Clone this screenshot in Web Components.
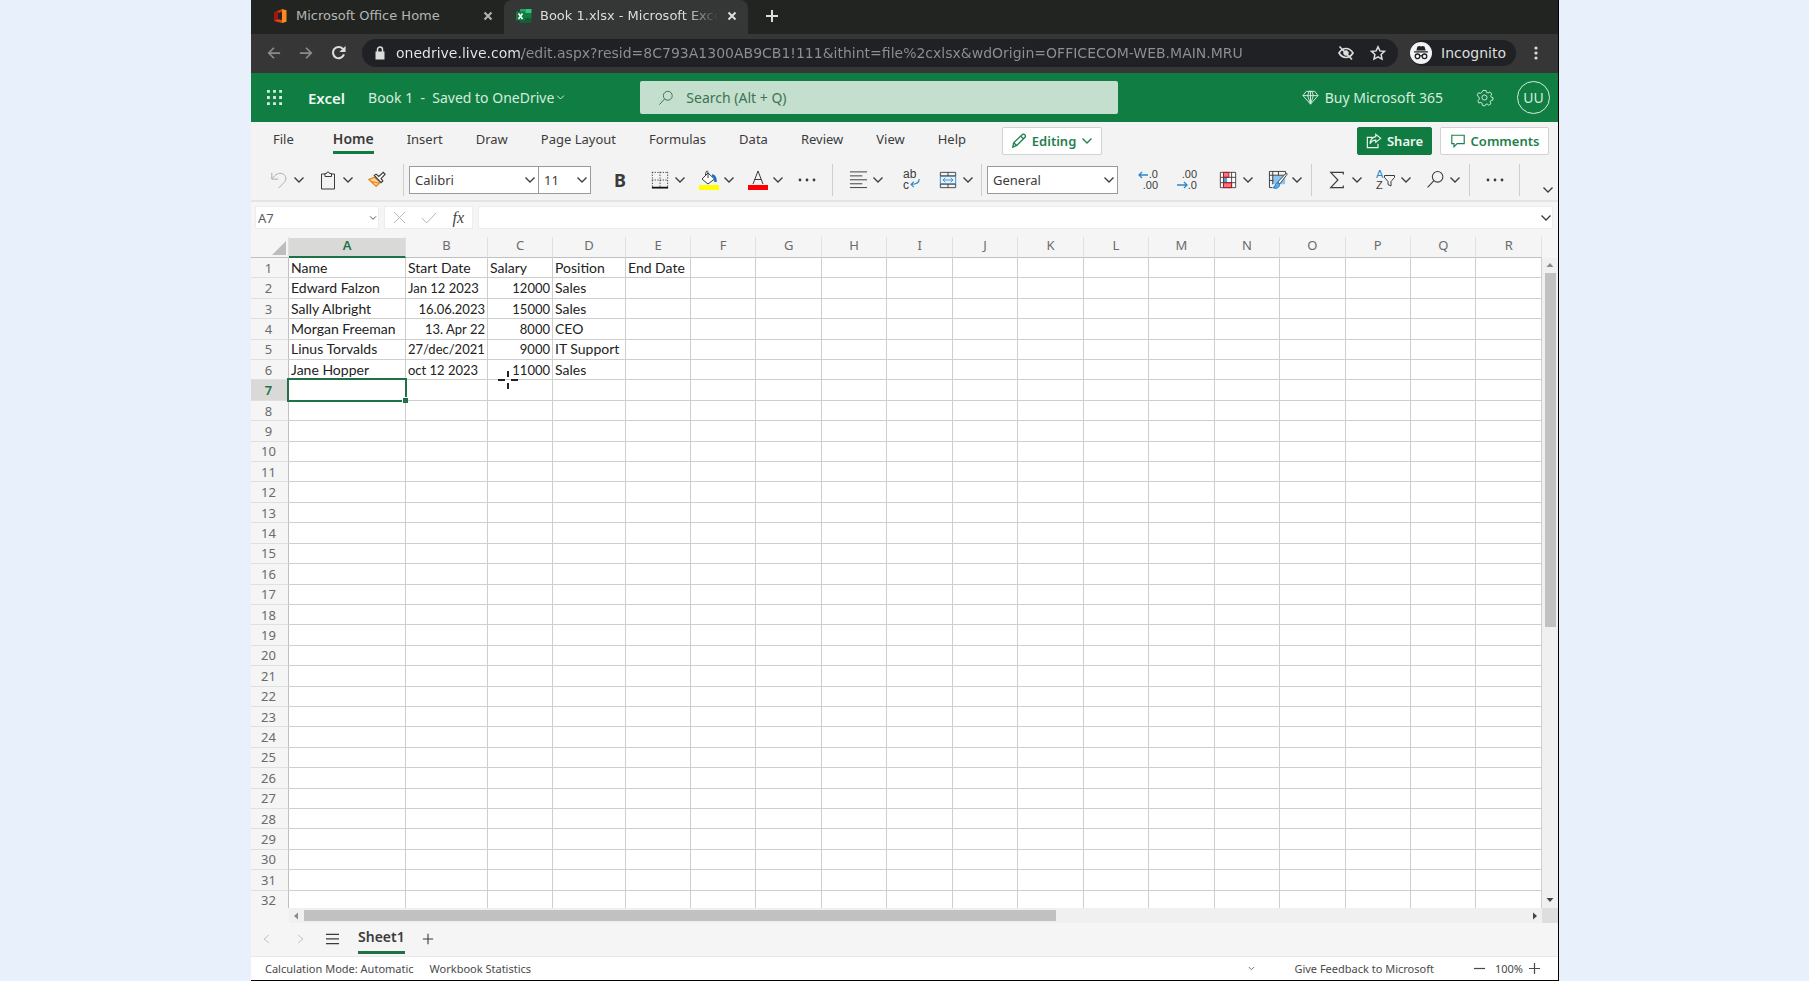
<!DOCTYPE html>
<html lang="en">
<head>
<meta charset="utf-8">
<meta name="viewport" content="width=device-width, initial-scale=1">
<title>Book 1.xlsx - Microsoft Excel Online</title>
<style>
    html, body { height:100%; margin:0; }
    body { background:#e8f0fb; font-family:"Noto Sans", "Open Sans", sans-serif; font-size:13px; color:#3b3b3b; }
</style>
</head>
<body>
<excel-window></excel-window>

<script>
const icons = {
    chevron: ['0 0 12 12', '<path stroke-width="1.300" d="M1.5 3.5 6 8l4.5-4.5"/>'],
    close: ['0 0 12 12', '<path d="m2.500 2.500 7 7m0-7-7 7" stroke-width="2"/>'],
    plus: ['0 0 14 14', '<path stroke-width="1.300" d="M7 1v12M1 7h12"/>'],
    newtab: ['0 0 12 12', '<path stroke-width="2" d="M6 0v12M0 6h12"/>'],
    minus: ['0 0 14 14', '<path stroke-width="1.300" d="M1 7h12"/>'],
    left: ['0 0 12 12', '<path d="M8 2 3 6l5 4"/>'],
    right: ['0 0 12 12', '<path d="m4 2 5 4-5 4"/>'],
    menu: ['0 0 14 14', '<path stroke-width="1.300" d="M0 2.500h14M0 7.500h14M0 12.500h14"/>'],
    office: ['0 0 16 16', '<g stroke="none"><path fill="#d83b01" d="M2 4.500 10 1v2.800L6 5v6.300L2 13z"/><path fill="#a4160d" d="M2 4.500 6 3v8.300L2 13z"/><path fill="#ff8a1f" d="m10 1 4.500 1.300v11.400L10 15z"/><path fill="#e8401c" d="m2 13 4-1.700 4 .7v3z"/></g>'],
    excel: ['0 0 16 16', '<g stroke="none"><path fill="#21a366" d="M4 1h6v4H4z"/><path fill="#33c481" d="M10 1h5.500v4H10z"/><path fill="#107c41" d="M4 5h6v6H4zM10 5h5.500v5H10z"/><path fill="#185c37" d="M4 10h11.500v5H4z"/><path fill="#107c41" d="M0 3.500h9v9H0z"/></g><path stroke="#fff" stroke-width="1.600" d="m2.500 5.500 4 5.500m0-5.500-4 5.500"/>'],
    back: ['0 0 16 16', '<path stroke-width="2" d="M15 8H2m6-6L2 8l6 6"/>'],
    forward: ['0 0 16 16', '<path stroke-width="2" d="M1 8h13M8 2l6 6-6 6"/>'],
    reload: ['0 0 16 16', '<path stroke-width="2.200" d="M13.800 10A6 6 0 1 1 12.500 4l1.500 2"/><path fill="currentColor" stroke="none" d="M15.500 1v6.500H9z"/>'],
    lock: ['0 0 12 14', '<path fill="currentColor" stroke="none" d="M1.500 5.500h9v8h-9z"/><path stroke-width="1.500" d="M3.500 6V3.500a2.500 2.500 0 0 1 5 0V6"/>'],
    eyeoff: ['0 0 16 16', '<path stroke-width="1.700" d="M1 8c2-3.200 4.300-4.500 7-4.500S13 4.800 15 8c-2 3.200-4.300 4.500-7 4.500S3 11.200 1 8zM1.500 1.500l12.500 13"/><circle cx="8" cy="8" r="2.300" fill="currentColor"/>'],
    star: ['0 0 16 16', '<path stroke-width="1.500" d="m8 1.700 1.900 4.200 4.600.5-3.400 3.100.9 4.600L8 11.800l-4 2.300.9-4.600L1.500 6.400l4.600-.5z"/>'],
    incognito: ['0 0 22 22', '<circle cx="11" cy="11" r="11" fill="#f1f3f4" stroke="none"/><path stroke="none" fill="#202124" d="M7.500 4.500 9.500 4l1.500.5 1.500-.5 2 .5 1.200 4H6.300zM4 9.300h14v1.200H4z"/><g stroke="#202124" stroke-width="1.300"><circle cx="7.500" cy="14.300" r="2.300"/><circle cx="14.500" cy="14.300" r="2.300"/><path d="M9.800 14q1.200-.8 2.400 0"/></g>'],
    dots: ['0 0 4 14', '<g fill="currentColor" stroke="none"><circle cx="2" cy="2" r="1.600"/><circle cx="2" cy="7" r="1.600"/><circle cx="2" cy="12" r="1.600"/></g>'],
    more: ['0 0 18 4', '<g fill="currentColor" stroke="none"><circle cx="2" cy="2" r="1.400"/><circle cx="9" cy="2" r="1.400"/><circle cx="16" cy="2" r="1.400"/></g>'],
    waffle: ['0 0 16 16', '<path stroke-width="3" stroke-dasharray="3 3.500" d="M0 1.500h16M0 8h16M0 14.500h16"/>'],
    search: ['0 0 18 18', '<circle cx="11" cy="6.500" r="5"/><path d="M7.500 10 1.500 16.500"/>'],
    gem: ['0 0 18 18', '<path d="M4.500 2.500h9L17 7l-8 9-8-9zM1 7h16M6 7l3 9 3-9-1.500-4.500h-3zM9 2.500V16"/>'],
    gear: ['0 0 18 18', '<circle cx="9" cy="9" r="2.700"/><path d="m7.300 1.500 3.400 0 .5 2 1.600.7 1.900-1.100 2 2.300-1.100 1.800.5 1.500 2 .5-.3 2.600-2.100.4-.8 1.500.9 1.900-2.300 1.600-1.600-1.300-1.500.3-1.100 1.800-2.500-.7-.2-2.100-1.400-.9-2.100.6-1.200-2.500 1.600-1.400v-1.500L1.300 6.200l1.400-2.200 2 .6 1.500-1z"/>'],
    undo: ['0 0 20 20', '<path d="M2 2v7h7M2.500 8.500C6 3.500 10 1.500 14 3c4.500 2 4.500 7 1.500 10l-6 6"/>'],
    paste: ['0 0 20 20', '<path d="M7 4H3.500v15h13V4H13M7 6.500h6.500v-3h-2a1.500 1.500 0 0 0-3 0H7z"/>'],
    brush: ['0 0 20 20', '<path stroke="#e78a1e" stroke-width="1.500" fill="#ffd9a8" d="M7 7 1 9.500l8 7.500 4.500-4.500zM3.500 11.500l8.500 2"/><path fill="#fff" stroke-width="1.300" d="m7 5 2-1.500 3 2.500 5-4.500 2 2-4.500 5 2 2.500-2 2z"/>'],
    borders: ['0 0 20 20', '<path stroke-dasharray="1.500 1.500" d="M1.500 1v17M10 1v17M18.500 1v17M1 1.500h18M1 10h18"/><path stroke="#111" stroke-width="2" d="M1 18.500h18"/>'],
    fill: ['0 0 20 20', '<path d="m3 9 6-6 6.500 6L9 14z" fill="#fff"/><path d="M9 8V3.500C9-1 6.500 1 6.500 5"/><path stroke="#1473c5" stroke-width="2.500" d="M13 5.500c3 0 3.500 2.500 3.500 6.500"/><path stroke="#ff0" stroke-width="5" d="M0 17.500h20"/>'],
    color: ['0 0 20 20', '<path d="m5 14 5-13 5 13M6.700 9.500h6.600"/><path stroke="#f00" stroke-width="5" d="M0 17.500h20"/>'],
    align: ['0 0 20 20', '<path d="M1 2h18M1 6.200h13M1 10.300h18M1 14.500h13M1 18.500h18"/>'],
    merge: ['0 0 20 20', '<path stroke="#2b88c9" fill="#e5f2fb" d="M1.500 5.500h17v9h-17z"/><path d="M1.500 1.500h17v4h-17zM1.500 14.500h17v4h-17zM10 1.500v4M10 14.500v4"/><path stroke="#2b88c9" d="M4.500 10h11M7 7.500 4.500 10 7 12.500M13 7.500l2.500 2.500-2.500 2.500"/>'],
    conditional: ['0 0 20 20', '<path fill="#fff" stroke="none" d="M1 2h18v17H1z"/><path stroke="none" fill="#f4777f" d="M5 2h6v5H5zM5 13h9v6H5z"/><path stroke="none" fill="#4ba3e0" d="M5 7h4v6H5z"/><path d="M1.500 1.500h17v17h-17zM1.500 7h17M1.500 13h17M5 1.500v17M14 1.500v17"/><path stroke="#c50f1f" d="M5 1.500h6V7H5zM5 13h9v5.500H5z"/>'],
    format: ['0 0 20 20', '<path stroke="none" fill="#8cc4f0" d="M5 6h13v9H5z"/><path d="M18.500 5V1.500h-17v17h3M1.500 5.500h17M5 1.500V15M11 1.500v4M1.500 11h4"/><path fill="#fff" d="m10 13 8.500-9c2-1 2 0 1 1.500l-7 9z"/><path stroke="#1473c5" fill="#5aaeea" d="M5 18.500c2.500 0 2-3 4-4.500s4.500 1 2.500 3.500-4.500 2-6.500 1z"/>'],
    sum: ['0 0 20 20', '<path stroke-width="1.300" d="M17 4V1.500H3L11 10l-8 8.500h14V16"/>'],
    funnel: ['0 0 20 20', '<path d="M8.500 5.500h10v2l-3.500 4v4.500l-3-1.500v-3l-3.500-4z"/>'],
    wrap: ['0 0 20 20', '<path stroke="#2b88c9" stroke-width="1.300" d="M18 10c0 4-2 6-9 6m3-3-3 3 3 3"/>'],
    arrowleft: ['0 0 12 8', '<path stroke="#2b88c9" stroke-width="1.300" d="M10 4H1m3-3L1 4l3 3"/>'],
    arrowright: ['0 0 12 8', '<path stroke="#2b88c9" stroke-width="1.300" d="M0 4h10M7 1l3 3-3 3"/>'],
    pencil: ['0 0 18 18', '<path stroke-width="1.500" d="m2 16 1-5L13 1.500c2-1 4 1.500 3 3L6.500 14zM11 3.500 14.500 7M3 11l3.500 3"/>'],
    share: ['0 0 18 18', '<path stroke-width="1.300" d="M7 5H1.500v11.500h12V12M11 1.500 16.500 6 11 10.500V8C8 8 6 9.500 4.500 12 5 7 7.500 4.500 11 4z"/>'],
    comment: ['0 0 18 18', '<path stroke-width="1.300" d="M2 2.500h14v9.500H8L4.500 15.500V12H2z"/>'],
    cross: ['0 0 14 14', '<path d="m1 1 12 12m0-12L1 13"/>'],
    check: ['0 0 16 14', '<path d="m1 7 4.500 5L15 2"/>'],
    up: ['0 0 8 8', '<path fill="currentColor" stroke="none" d="M.5 6 4 2l3.500 4z"/>'],
    down: ['0 0 8 8', '<path fill="currentColor" stroke="none" d="M.5 2 4 6l3.500-4z"/>'],
    prev: ['0 0 8 8', '<path fill="currentColor" stroke="none" d="M6 .5 2 4l4 3.500z"/>'],
    next: ['0 0 8 8', '<path fill="currentColor" stroke="none" d="M2 .5 6 4 2 7.500z"/>'],
};

// tiny base: every element clones its static template once
class Part extends HTMLElement {
    constructor() {
        super();
        const tpl = document.createElement('template');
        tpl.innerHTML = Part.reset + this.constructor.html;
        this.attachShadow({mode:'open'}).append(tpl.content.cloneNode(true));
    }
}
Part.reset = `<style>
    * { box-sizing:border-box; }
    button, input, select { font:inherit; color:inherit; background:none; border:0; padding:0; margin:0; min-width:0; outline:0; border-radius:0; }
    button { display:flex; align-items:center; justify-content:center; white-space:nowrap; cursor:pointer; }
    select { appearance:none; }
    a { color:inherit; text-decoration:none; }
</style>`;

class UiIcon extends HTMLElement {
    constructor() {
        super();
        this.attachShadow({mode:'open'});
    }
    connectedCallback() {
        const [box, body] = icons[this.getAttribute('name')];
        const [, , w, h] = box.split(' ');
        const size = this.getAttribute('size') || w;
        this.shadowRoot.innerHTML = `
        <style>
            :host { display:inline-flex; flex:none; }
            svg { display:block; fill:none; stroke:currentColor; overflow:visible; }
        </style>
        <svg viewBox="${box}" width="${size}" height="${Math.round(size * h / w)}" aria-hidden="true">${body}</svg>`;
    }
}
customElements.define('ui-icon', UiIcon);

class BrowserTab extends Part {
    static html = `
    <style>
        :host { display:flex; align-items:center; height:34px; padding:0 10px 3px 21px; gap:8px; color:#b4b6b4; font-size:13px; }
        :host([active]) { background:#353636; color:#dcdedc; border-radius:8px 8px 0 0; padding-left:12px; }
        .title { flex:1; overflow:hidden; white-space:nowrap; }
        :host([active]) .title { mask-image:linear-gradient(90deg, #000 82%, transparent); }
    </style>
    <slot name="icon"></slot>
    <span class="title"><slot></slot></span>
    <button aria-label="Close tab"><ui-icon name="close"></ui-icon></button>`;
}
customElements.define('browser-tab', BrowserTab);

class BrowserBar extends Part {
    static html = `
    <style>
        :host { display:block; background:#222422; color:#dcdedc; font-family:"DejaVu Sans", sans-serif; }
        .tabs { display:flex; height:34px; }
        browser-tab { width:253px; }
        browser-tab[active] { width:244px; }
        .new { width:47px; padding-bottom:2px; }
        .nav { display:flex; align-items:center; height:39px; background:#363636; padding:0 20px 2px 13px; }
        .nav > button { width:20px; margin-right:12px; }
        .dim { color:#8b8c8b; }
        .address { flex:1; display:flex; align-items:center; gap:10px; height:28px; margin-left:2px; padding:0 12px; border-radius:14px; background:#202124; }
        input { flex:1; font-size:14px; height:28px; color:transparent; background:linear-gradient(90deg, #e8eaed 126px, #8f9092 126px); background-clip:text; -webkit-background-clip:text; }
        .incognito { height:26px; margin:0 0 0 12px; padding-right:10px; gap:9px; border-radius:13px; background:#202124; font-size:14px; }
        .nav > .incognito { width:auto; margin-right:18px; }
        .nav > .dots { width:4px; margin:0; }
        .address button + button { margin-left:6px; }
    </style>
    <div class="tabs">
        <browser-tab><ui-icon slot="icon" name="office"></ui-icon>Microsoft Office Home</browser-tab>
        <browser-tab active><ui-icon slot="icon" name="excel"></ui-icon>Book 1.xlsx - Microsoft Excel</browser-tab>
        <button class="new" aria-label="New tab"><ui-icon name="newtab"></ui-icon></button>
    </div>
    <div class="nav">
        <button class="dim" aria-label="Back"><ui-icon name="back" size="14"></ui-icon></button>
        <button class="dim" aria-label="Forward"><ui-icon name="forward" size="14"></ui-icon></button>
        <button aria-label="Reload"><ui-icon name="reload" size="15"></ui-icon></button>
        <div class="address">
            <ui-icon name="lock"></ui-icon>
            <input aria-label="Address" value="onedrive.live.com/edit.aspx?resid=8C793A1300AB9CB1!111&amp;ithint=file%2cxlsx&amp;wdOrigin=OFFICECOM-WEB.MAIN.MRU">
            <button aria-label="Third-party cookies blocked"><ui-icon name="eyeoff"></ui-icon></button>
            <button aria-label="Bookmark this page"><ui-icon name="star"></ui-icon></button>
        </div>
        <button class="incognito"><ui-icon name="incognito"></ui-icon>Incognito</button>
        <button class="dots" aria-label="Menu"><ui-icon name="dots"></ui-icon></button>
    </div>`;
}
customElements.define('browser-bar', BrowserBar);

class SuiteHeader extends Part {
    static html = `
    <style>
        :host { display:flex; align-items:center; height:49px; padding:0 8px 0 16px; background:#107e43; color:#d6ecdf; font-size:14px; }
        .brand { margin:0 23px 0 26px; font-weight:600; font-size:15px; color:#eef8f2; }
        .file { gap:2px; }
        .mid { flex:1; display:flex; padding-left:75px; }
        label { display:flex; align-items:center; gap:12px; width:478px; height:33px; padding-left:18px; border-radius:2px; background:#c4dfcd; color:#2f6b4a; }
        input { flex:1; }
        input::placeholder { color:#3c7454; opacity:1; }
        .buy { gap:6px; }
        .gear { margin:0 24px 0 33px; }
        .me { width:33px; height:33px; border:1px solid #d6ecdf; border-radius:50%; }
    </style>
    <button aria-label="App launcher"><ui-icon name="waffle" size="15"></ui-icon></button>
    <a class="brand" href="#">Excel</a>
    <button class="file">Book 1&nbsp; -&nbsp; Saved to OneDrive <ui-icon name="chevron" size="9"></ui-icon></button>
    <div class="mid"><label><ui-icon name="search" size="16"></ui-icon><input type="search" placeholder="Search (Alt + Q)" aria-label="Search"></label></div>
    <button class="buy"><ui-icon name="gem" size="17"></ui-icon>Buy Microsoft 365</button>
    <button class="gear" aria-label="Settings"><ui-icon name="gear" size="17"></ui-icon></button>
    <button class="me">UU</button>`;
}
customElements.define('suite-header', SuiteHeader);

class RibbonTabs extends Part {
    static html = `
    <style>
        :host { display:flex; height:37px; padding:0 9px 0 6px; background:#f3f3f3; }
        nav { display:flex; }
        nav a { position:relative; height:33px; padding:0 17px 0 16px; line-height:34px; }
        nav .on { margin-left:6px; font-size:14px; font-weight:600; }
        .on::after { content:""; position:absolute; left:16px; right:17px; bottom:1px; height:3px; background:#107c41; }
        button { height:28px; margin-top:5px; border:1px solid #d2d2d2; border-radius:2px; background:#fff; color:#1f7f4c; font-weight:600; gap:5px; }
        .edit { width:100px; margin-left:19px; }
        .share { width:75px; margin-left:auto; background:#107c41; border-color:#107c41; color:#eef8f2; }
        .comments { width:109px; margin-left:8px; }
    </style>
    <nav>
        <a href="#">File</a><a href="#" class="on">Home</a><a href="#">Insert</a><a href="#">Draw</a><a href="#">Page Layout</a><a href="#">Formulas</a><a href="#">Data</a><a href="#">Review</a><a href="#">View</a><a href="#">Help</a>
    </nav>
    <button class="edit"><ui-icon name="pencil" size="16"></ui-icon>Editing<ui-icon name="chevron"></ui-icon></button>
    <button class="share"><ui-icon name="share" size="16"></ui-icon>Share</button>
    <button class="comments"><ui-icon name="comment" size="16"></ui-icon>Comments</button>`;
}
customElements.define('ribbon-tabs', RibbonTabs);

// icon button, with a drop-down arrow when [menu] is set
class ToolButton extends Part {
    static html = `
    <style>
        :host { display:flex; flex:none; }
        button { width:20px; height:28px; }
        .arrow { display:none; }
        :host([menu]) .arrow { display:flex; }
    </style>
    <button class="main"><slot></slot></button>
    <button class="arrow" aria-label="More options"><ui-icon name="chevron" size="12"></ui-icon></button>`;
    connectedCallback() {
        this.shadowRoot.querySelector('.main').setAttribute('aria-label', this.getAttribute('label'));
    }
}
customElements.define('tool-button', ToolButton);

class RibbonBar extends Part {
    static html = `
    <style>
        :host { display:flex; align-items:center; height:43px; padding:0 4px 0 18px; background:#f3f3f3; border-bottom:2px solid #e4e4e4; }
        .group { display:flex; align-items:center; height:32px; gap:9px; }
        .group + .group { border-left:1px solid #cfcfcf; }
        .edit { width:134px; }
        .font { width:429px; padding-left:5px; }
        .para { width:149px; padding-left:15px; gap:15px; }
        .num { width:330px; padding-left:5px; }
        .data { width:158px; padding-left:15px; }
        .over { width:50px; padding-left:15px; }
        .end { flex:1; justify-content:flex-end; align-items:flex-end; }
        label { position:relative; display:flex; align-items:center; height:28px; border:1px solid #9a9a9a; background:#fff; }
        label ui-icon { position:absolute; right:2px; pointer-events:none; }
        select { width:100%; height:26px; padding-left:5px; }
        .family { width:130px; }
        .size { width:53px; margin-left:-10px; }
        .format { width:131px; }
        b { font-size:18px; font-weight:700; }
        .bold { margin:0 11px 0 10px; }
        .stack { position:relative; display:grid; width:20px; height:22px; line-height:11px; font-family:"Liberation Sans", sans-serif; font-size:11px; text-align:right; }
        .stack ui-icon { position:absolute; left:0; top:2px; }
        .stack.low ui-icon { top:12px; }
        .stack.wrap { text-align:left; font-size:12px; }
        .stack.wrap ui-icon, .stack.az ui-icon { top:1px; }
        .stack.az { text-align:left; }
        .a { color:#2b88c9; }
        .n1 { margin-left:11px; }
        .n2 { margin:0 12px 0 10px; }
        .muted { color:#a6a6a6; }
    </style>
    <div class="group edit">
        <tool-button menu label="Undo"><ui-icon class="muted" name="undo" size="18"></ui-icon></tool-button>
        <tool-button menu label="Paste"><ui-icon name="paste" size="20"></ui-icon></tool-button>
        <tool-button label="Format painter"><ui-icon name="brush" size="18"></ui-icon></tool-button>
    </div>
    <div class="group font">
        <label class="family"><select aria-label="Font"><option>Calibri</option></select><ui-icon name="chevron"></ui-icon></label>
        <label class="size"><select aria-label="Font size"><option>11</option></select><ui-icon name="chevron"></ui-icon></label>
        <tool-button class="bold" label="Bold"><b>B</b></tool-button>
        <tool-button menu label="Borders"><ui-icon name="borders" size="18"></ui-icon></tool-button>
        <tool-button menu label="Fill color"><ui-icon name="fill" size="20"></ui-icon></tool-button>
        <tool-button menu label="Font color"><ui-icon name="color" size="20"></ui-icon></tool-button>
        <tool-button label="More font options"><ui-icon name="more"></ui-icon></tool-button>
    </div>
    <div class="group para">
        <tool-button menu label="Align"><ui-icon name="align" size="19"></ui-icon></tool-button>
        <tool-button label="Wrap text"><span class="stack wrap"><span>ab</span><span>c</span><ui-icon name="wrap" size="18"></ui-icon></span></tool-button>
        <tool-button menu label="Merge"><ui-icon name="merge" size="18"></ui-icon></tool-button>
    </div>
    <div class="group num">
        <label class="format"><select aria-label="Number format"><option>General</option></select><ui-icon name="chevron"></ui-icon></label>
        <tool-button class="n1" label="Increase decimal"><span class="stack"><span>.0</span><span>.00</span><ui-icon name="arrowleft" size="12"></ui-icon></span></tool-button>
        <tool-button class="n2" label="Decrease decimal"><span class="stack low"><span>.00</span><span>.0</span><ui-icon name="arrowright" size="12"></ui-icon></span></tool-button>
        <tool-button menu label="Conditional formatting"><ui-icon name="conditional" size="18"></ui-icon></tool-button>
        <tool-button menu label="Cell styles"><ui-icon name="format" size="19"></ui-icon></tool-button>
    </div>
    <div class="group data">
        <tool-button menu label="AutoSum"><ui-icon name="sum" size="18"></ui-icon></tool-button>
        <tool-button menu label="Sort and filter"><span class="stack az"><span class="a">A</span><span>Z</span><ui-icon name="funnel"></ui-icon></span></tool-button>
        <tool-button menu label="Find"><ui-icon name="search" size="19"></ui-icon></tool-button>
    </div>
    <div class="group over"><tool-button label="More commands"><ui-icon name="more"></ui-icon></tool-button></div>
    <div class="group end"><button aria-label="Collapse ribbon"><ui-icon name="chevron"></ui-icon></button></div>`;
}
customElements.define('ribbon-bar', RibbonBar);

class FormulaBar extends Part {
    static html = `
    <style>
        :host { display:flex; gap:5px; padding:4px 5px 7px 4px; background:#f5f5f5; }
        label, .tools { display:flex; align-items:center; height:23px; background:#fff; border:1px solid #ededed; }
        .name { width:124px; padding:0 1px 0 2px; }
        .name input { flex:1; color:#5a5a5a; }
        .tools { width:89px; justify-content:space-between; padding:0 8px; color:#b5b5b5; }
        i { font:italic 16px "Liberation Serif", serif; color:#444; }
        .fx { flex:1; }
        .fx input { flex:1; }
    </style>
    <label class="name"><input aria-label="Name box" value="A7"><ui-icon name="chevron" size="8"></ui-icon></label>
    <div class="tools">
        <button aria-label="Cancel"><ui-icon name="cross" size="13"></ui-icon></button>
        <button aria-label="Enter"><ui-icon name="check"></ui-icon></button>
        <button aria-label="Insert function"><i>fx</i></button>
    </div>
    <label class="fx"><input aria-label="Formula"><ui-icon name="chevron"></ui-icon></label>`;
}
customElements.define('formula-bar', FormulaBar);

const rows = [
    ['Name', 'Start Date', 'Salary', 'Position', 'End Date'],
    ['Edward Falzon', 'Jan 12 2023', 12000, 'Sales'],
    ['Sally Albright', '>16.06.2023', 15000, 'Sales'],
    ['Morgan Freeman', '>13. Apr 22', 8000, 'CEO'],
    ['Linus Torvalds', '27/dec/2021', 9000, 'IT Support'],
    ['Jane Hopper', 'oct 12 2023', 11000, 'Sales'],
];

class SheetGrid extends Part {
    static html = `
    <style>
        :host { display:grid; grid-template-columns:minmax(0, 1fr) 16px; grid-template-rows:minmax(0, 1fr) 15px; flex:1; min-height:0; background:#f5f5f5; }
        .view { position:relative; overflow:hidden; }
        table { width:100%; height:675px; table-layout:fixed; border-collapse:separate; border-spacing:0; background:#fff; }
        th, td { padding:0; border:solid #cecece; border-width:0 1px 1px 0; white-space:nowrap; line-height:18px; }
        th { font-weight:400; color:#6b6b6b; background:#f5f5f5; border-color:#e0e0e0; }
        thead th { height:22px; border-top:2px solid #f5f5f5; border-bottom-color:#c0c0c0; line-height:15px; vertical-align:top; }
        tbody th { padding-right:2px; border-right-color:#c0c0c0; }
        td { padding:0 2px; font:14px/18px Lato, sans-serif; color:#222; }
        .num { font-size:13px; }
        .right { text-align:right; }
        .rowhead { width:38px; } .a { width:117px; } .b { width:82px; } .c { width:65px; } .d { width:73px; } .e { width:65px; }
        .on { background:#d9dad8; color:#1f7246; font-weight:600; }
        thead .on { border-bottom:2px solid #1f7246; }
        .corner::after { content:""; display:block; margin:3px 2px 0 auto; width:14px; height:14px; background:#bdbdbd; clip-path:polygon(100% 0, 100% 100%, 0 100%); }
        .cell { position:relative; }
        .cell::before { content:""; position:absolute; inset:-2px; border:2px solid #1f7246; }
        .cell::after { content:""; position:absolute; right:-3px; bottom:-3px; width:5px; height:5px; background:#1f7246; border:solid #fff; border-width:1px 0 0 1px; }
        .pointer { position:absolute; left:247px; top:134px; }
        .bar { display:flex; align-items:center; color:#8a8a8a; background:#f0f0f0; }
        .v { flex-direction:column; margin-top:22px; padding:3px 0 4px; gap:4px; }
        .h { margin-left:38px; padding:0 3px; gap:4px; }
        .thumb { background:#c1c1c1; }
        .v .thumb { width:11px; height:55%; }
        .h .thumb { height:11px; width:calc(60% + 4px); }
        .grow { margin-top:auto; color:#444; }
        .h .grow { margin:0 0 0 auto; }
        .knob { background:#dedede; }
    </style>
    <div class="view">
        <table>
            <thead><tr></tr></thead>
            <tbody></tbody>
        </table>
        <svg class="pointer" width="20" height="20" viewBox="0 0 20 20" fill="none" stroke="#222" stroke-width="2" aria-hidden="true"><path d="M10 1v6M10 13v6M0 10h7M13 10h7"/></svg>
    </div>
    <div class="bar v"><ui-icon name="up"></ui-icon><span class="thumb"></span><ui-icon class="grow" name="down"></ui-icon></div>
    <div class="bar h"><ui-icon name="prev"></ui-icon><span class="thumb"></span><ui-icon class="grow" name="next"></ui-icon></div>
    <div class="knob"></div>`;
    connectedCallback() {
        const letters = 'ABCDEFGHIJKLMNOPQR'.split('');
        this.shadowRoot.querySelector('thead tr').innerHTML = '<th class="rowhead corner"></th>' +
            letters.map(l => `<th scope="col" class="${l.toLowerCase()}${l === 'A' ? ' on' : ''}">${l}</th>`).join('');
        let html = '';
        for (let r = 1; r <= 32; r++) {
            const data = rows[r - 1] || [];
            html += `<tr><th scope="row"${r === 7 ? ' class="on"' : ''}>${r}</th>`;
            letters.forEach((l, c) => {
                let value = String(data[c] ?? '');
                const cls = [];
                if (r === 7 && c === 0) cls.push('cell');
                if (/\d/.test(value)) cls.push('num');
                // a leading > marks text that the sheet right-aligns (dates)
                if (typeof data[c] === 'number' || value[0] === '>') cls.push('right');
                value = value.replace('>', '');
                html += `<td class="${cls.join(' ')}">${value}</td>`;
            });
            html += '</tr>';
        }
        this.shadowRoot.querySelector('tbody').innerHTML = html;
    }
}
customElements.define('sheet-grid', SheetGrid);

class SheetTabs extends Part {
    static html = `
    <style>
        :host { display:flex; align-items:center; height:34px; padding:0 0 2px 10px; background:#f5f5f5; border-bottom:1px solid #e8e8e8; }
        .arrow { width:12px; margin-right:21px; color:#c4c4c4; }
        .all { margin:0 19px 0 -1px; }
        .sheet { height:31px; padding-bottom:2px; border-bottom:3px solid #1f7246; font-size:14px; font-weight:600; margin-right:17px; }
    </style>
    <button class="arrow" aria-label="Previous sheet"><ui-icon name="left"></ui-icon></button>
    <button class="arrow" aria-label="Next sheet"><ui-icon name="right"></ui-icon></button>
    <button class="all" aria-label="All sheets"><ui-icon name="menu" size="13"></ui-icon></button>
    <button class="sheet">Sheet1</button>
    <button aria-label="New sheet"><ui-icon name="plus" size="12"></ui-icon></button>`;
}
customElements.define('sheet-tabs', SheetTabs);

class StatusBar extends Part {
    static html = `
    <style>
        :host { display:flex; align-items:center; height:23px; padding:0 17px 1px 14px; background:#fff; font-size:11px; color:#4a4a4a; }
        .stats { margin-left:16px; }
        .more { margin-left:auto; }
        .feedback { margin:0 39px; }
        .zoom { margin:0 5px 0 9px; }
    </style>
    <button>Calculation Mode: Automatic</button>
    <button class="stats">Workbook Statistics</button>
    <button class="more" aria-label="Status options"><ui-icon name="chevron" size="7"></ui-icon></button>
    <button class="feedback">Give Feedback to Microsoft</button>
    <button aria-label="Zoom out"><ui-icon name="minus" size="13"></ui-icon></button>
    <button class="zoom">100%</button>
    <button aria-label="Zoom in"><ui-icon name="plus" size="13"></ui-icon></button>`;
}
customElements.define('status-bar', StatusBar);

class ExcelWindow extends Part {
    static html = `
    <style>
        :host { display:flex; flex-direction:column; height:100vh; margin:0 250px 0 251px; box-sizing:border-box; border:solid #000; border-width:0 1px 1px 0; overflow:hidden; }
        :host > :not(sheet-grid) { flex:none; }
    </style>
    <browser-bar></browser-bar>
    <suite-header></suite-header>
    <ribbon-tabs></ribbon-tabs>
    <ribbon-bar></ribbon-bar>
    <formula-bar></formula-bar>
    <sheet-grid></sheet-grid>
    <sheet-tabs></sheet-tabs>
    <status-bar></status-bar>`;
}
customElements.define('excel-window', ExcelWindow);
</script>
</body>
</html>
